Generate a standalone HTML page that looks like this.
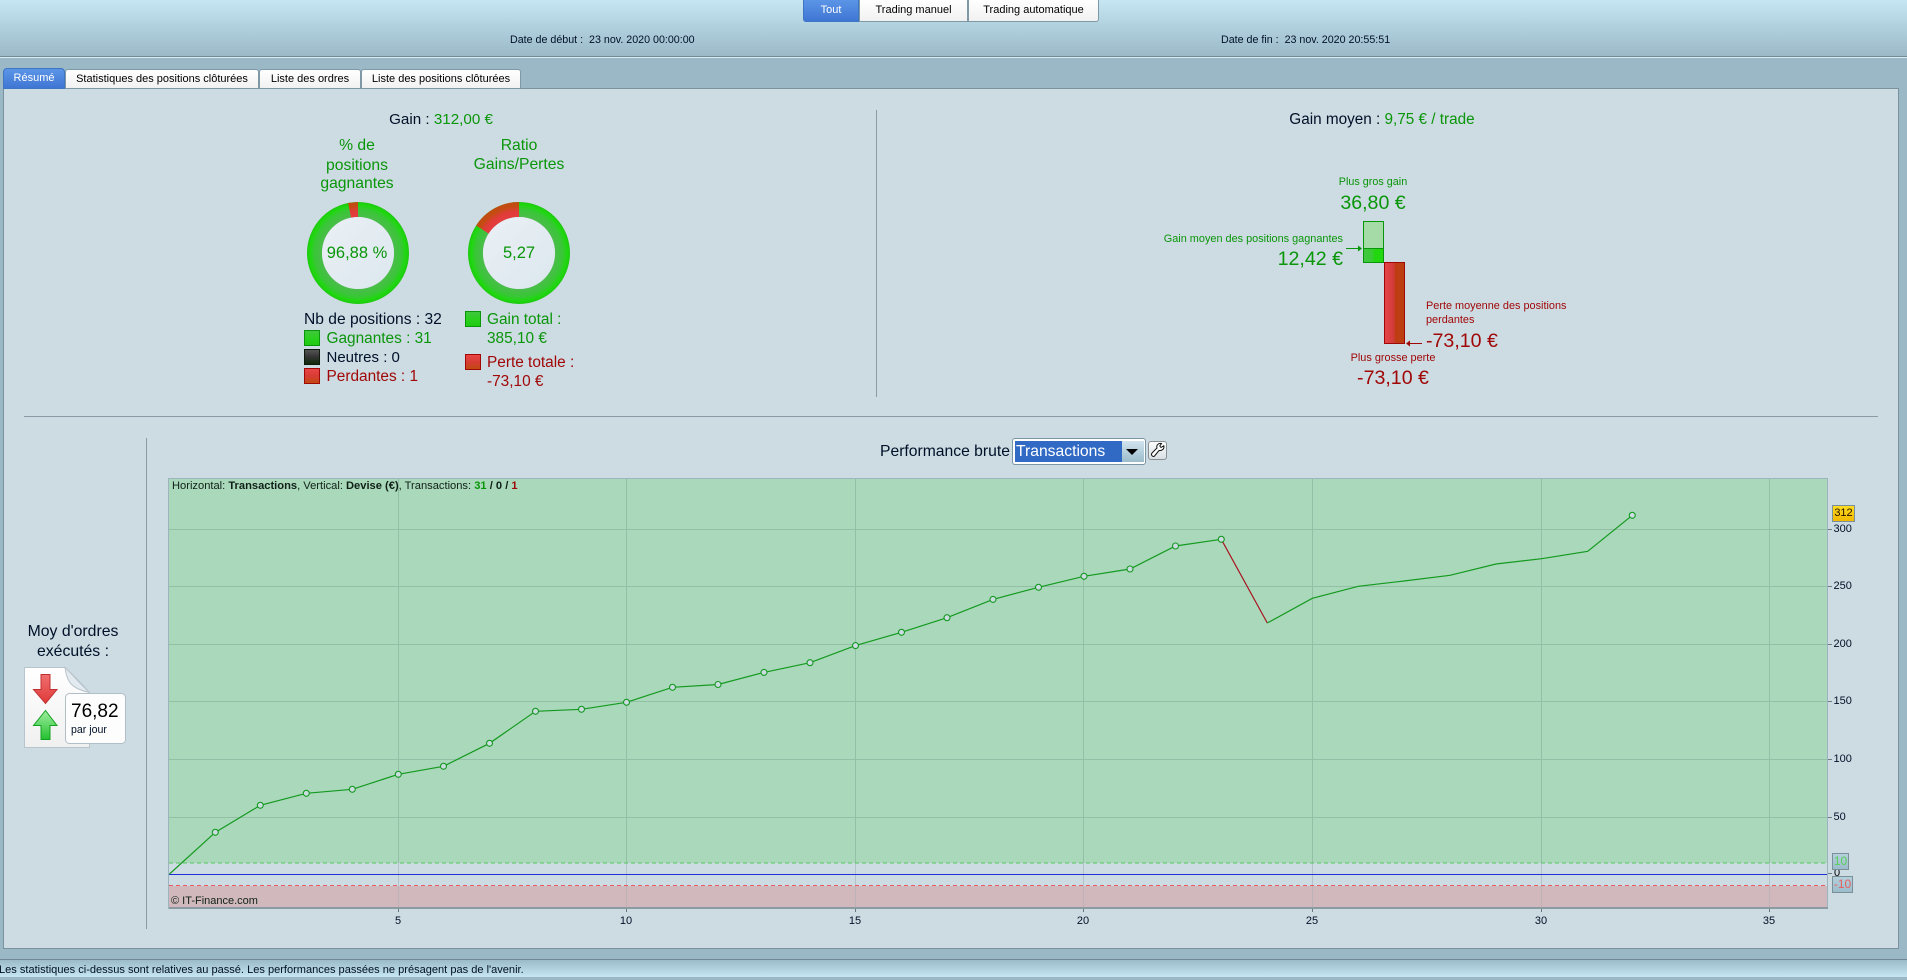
<!DOCTYPE html>
<html lang="fr"><head><meta charset="utf-8"><title>Résumé</title>
<style>
html,body{margin:0;padding:0;width:1907px;height:980px;overflow:hidden;background:#9ab8c5;font-family:"Liberation Sans",Arial,sans-serif;color:#001028}
.t{position:absolute;white-space:nowrap;height:20px;line-height:20px}
.c{text-align:center}.r{text-align:right}
.g{color:#0a960a}.d{color:#a00808}
.b{position:absolute;box-sizing:border-box;border:1px solid #7f98a5;text-align:center;font-size:11px;line-height:20px;background:linear-gradient(#fff,#f1f1f1);color:#000}
.sel{background:linear-gradient(#5b95e6,#3f76d4);color:#fff;border-color:#3f76c4}
.sw{position:absolute;width:16px;height:16px;box-sizing:border-box;border:1px solid}
.sg{border-color:#0a960a;background:linear-gradient(#3fc63f,#2bd01f 50%,#1ecb10)}
.sn{border-color:#0c1a0c;background:linear-gradient(#555 0,#333 50%,#102a08)}
.sr{border-color:#a00808;background:linear-gradient(#e84444,#d83c34 50%,#c04a10)}
.ln{position:absolute;background:#8b9aa5}
</style></head><body>
<div style="position:absolute;left:0;top:0;width:1907px;height:56px;background:linear-gradient(#c6e6f4,#9bb9c6)"></div>
<div style="position:absolute;left:0;top:56px;width:1907px;height:1px;background:#6f8c9a"></div>
<div style="position:absolute;left:0;top:57px;width:1907px;height:1px;background:#dfeaf0"></div>

<div class="b sel" style="left:803px;top:-1px;width:56px;height:23px;border-radius:0 0 0 3px">Tout</div>
<div class="b" style="left:859px;top:-1px;width:109px;height:23px">Trading manuel</div>
<div class="b" style="left:968px;top:-1px;width:131px;height:23px;border-radius:0 0 3px 0">Trading automatique</div>

<div class="t" style="left:510px;top:30px;font-size:10.7px">Date de début :&nbsp; 23 nov. 2020 00:00:00</div>
<div class="t" style="left:1221px;top:30px;font-size:10.7px">Date de fin :&nbsp; 23 nov. 2020 20:55:51</div>

<div style="position:absolute;left:3px;top:88px;width:1896px;height:861px;box-sizing:border-box;border:1px solid #7a929e;background:#cddbe2"></div>
<div class="b sel" style="left:3px;top:68px;width:62px;height:21px;border-radius:4px 4px 0 0;line-height:19px">Résumé</div>
<div class="b" style="left:65px;top:69px;width:194px;height:20px;border-radius:3px 3px 0 0;line-height:18px">Statistiques des positions clôturées</div>
<div class="b" style="left:259px;top:69px;width:102px;height:20px;border-radius:3px 3px 0 0;line-height:18px">Liste des ordres</div>
<div class="b" style="left:361px;top:69px;width:160px;height:20px;border-radius:3px 3px 0 0;line-height:18px">Liste des positions clôturées</div>

<div class="ln" style="left:876px;top:110px;width:1px;height:287px"></div>
<div class="ln" style="left:24px;top:416px;width:1854px;height:1px"></div>
<div class="ln" style="left:146px;top:438px;width:1px;height:491px"></div>

<div class="t c" style="left:261px;width:360px;top:110px;font-size:15.2px">Gain : <span class="g">312,00 €</span></div>
<div class="t c g" style="left:257px;width:200px;top:136px;font-size:15.7px">% de</div>
<div class="t c g" style="left:257px;width:200px;top:156px;font-size:15.7px">positions</div>
<div class="t c g" style="left:257px;width:200px;top:174px;font-size:15.7px">gagnantes</div>
<div class="t c g" style="left:419px;width:200px;top:136px;font-size:15.7px">Ratio</div>
<div class="t c g" style="left:419px;width:200px;top:155px;font-size:15.7px">Gains/Pertes</div>

<svg style="position:absolute;left:0;top:0" width="1907" height="980" viewBox="0 0 1907 980">
<defs>
<radialGradient id="rg1" gradientUnits="userSpaceOnUse" cx="358" cy="253" r="51"><stop offset=".7" stop-color="#4cbc4c"/><stop offset=".86" stop-color="#38c636"/><stop offset=".94" stop-color="#1ed80e"/><stop offset="1" stop-color="#1ec810"/></radialGradient>
<radialGradient id="rg2" gradientUnits="userSpaceOnUse" cx="519" cy="253" r="51"><stop offset=".7" stop-color="#4cbc4c"/><stop offset=".86" stop-color="#38c636"/><stop offset=".94" stop-color="#1ed80e"/><stop offset="1" stop-color="#1ec810"/></radialGradient>
<radialGradient id="rr1" gradientUnits="userSpaceOnUse" cx="358" cy="253" r="51"><stop offset=".7" stop-color="#e63c40"/><stop offset=".82" stop-color="#df3c38"/><stop offset=".92" stop-color="#c44c12"/><stop offset="1" stop-color="#c04c10"/></radialGradient>
<radialGradient id="rr2" gradientUnits="userSpaceOnUse" cx="519" cy="253" r="51"><stop offset=".7" stop-color="#e63c40"/><stop offset=".82" stop-color="#df3c38"/><stop offset=".92" stop-color="#c44c12"/><stop offset="1" stop-color="#c04c10"/></radialGradient>
<linearGradient id="ic" x1="0" y1="0" x2="1" y2="1"><stop offset="0" stop-color="#eaf0f5"/><stop offset="1" stop-color="#dce7ee"/></linearGradient>
<linearGradient id="gb" x1="0" x2="1"><stop offset="0" stop-color="#44c644"/><stop offset=".5" stop-color="#37cc32"/><stop offset=".5" stop-color="#22d610"/><stop offset="1" stop-color="#22d810"/></linearGradient>
<linearGradient id="rb" x1="0" x2="1"><stop offset="0" stop-color="#e84448"/><stop offset=".5" stop-color="#cf3a38"/><stop offset=".5" stop-color="#c03c14"/><stop offset="1" stop-color="#bc3e10"/></linearGradient>
<linearGradient id="dc" x1="0" y1="0" x2="0" y2="1"><stop offset="0" stop-color="#fff"/><stop offset="1" stop-color="#f0f0f0"/></linearGradient>
<linearGradient id="ra" x1="0" y1="0" x2="0" y2="1"><stop offset="0" stop-color="#f07070"/><stop offset="1" stop-color="#e03838"/></linearGradient>
<linearGradient id="ga" x1="0" y1="0" x2="0" y2="1"><stop offset="0" stop-color="#a0eea0"/><stop offset="1" stop-color="#24c030"/></linearGradient>
</defs>
<circle cx="358" cy="253" r="43.5" fill="none" stroke="url(#rg1)" stroke-width="15"/>
<path d="M358 202V217L351 217.7 348.1 203Z" fill="url(#rr1)"/>
<circle cx="358" cy="253" r="36" fill="url(#ic)"/>
<circle cx="519" cy="253" r="43.5" fill="none" stroke="url(#rg2)" stroke-width="15"/>
<path d="M519 202V217A36 36 0 0 0 488.7 233.6L476.1 225.5A51 51 0 0 1 519 202Z" fill="url(#rr2)"/>
<circle cx="519" cy="253" r="36" fill="url(#ic)"/>

<rect x="1363.5" y="221.5" width="20" height="41" fill="#a4dba6" stroke="#0a960a"/>
<rect x="1363.5" y="248.5" width="20" height="14" fill="url(#gb)" stroke="#0a960a"/>
<rect x="1384.5" y="262.5" width="20" height="81" fill="url(#rb)" stroke="#a00808"/>
<path d="M1346 248.5H1361" stroke="#0a960a" fill="none"/><path d="M1362 248.5l-4-3v6z" fill="#0a960a"/>
<path d="M1408 343.5H1422" stroke="#a00808" fill="none"/><path d="M1406 343.5l4-3v6z" fill="#a00808"/>

<path d="M24.5 667.5H65C72 674 82 684 89.5 692.5V747.5H24.5Z" fill="url(#dc)" stroke="#b8c4cc"/>
<path d="M65 667.5C67 680 69 688 89.5 692.5C82 686 72 674 65 667.5Z" fill="#e4ebf0" stroke="#b8c4cc"/>
<path d="M41 674.5H50V689.5H57L45.5 703.5 33.5 689.5H41Z" fill="url(#ra)" stroke="#c03030"/>
<path d="M45.5 710.5L57 725.5H50V739.5H41V725.5H33.5Z" fill="url(#ga)" stroke="#14a020"/>
<rect x="65.5" y="693.5" width="60" height="50" rx="4" fill="#fdfdfd" stroke="#b0bec6"/>

<!-- chart -->
<rect x="168" y="478" width="1660" height="431" fill="#9db4be"/>
<rect x="169" y="479" width="1658" height="384" fill="#aad8ba"/>
<rect x="169" y="863" width="1658" height="23" fill="#cddbe2"/>
<rect x="169" y="886" width="1658" height="21" fill="#d0b8bd"/>
<rect x="169" y="907" width="1659" height="2" fill="#8c9aa2"/>
<g stroke="#92bfa6" stroke-width="1" fill="none">
<path d="M169 529.5H1827M169 586.5H1827M169 644.5H1827M169 701.5H1827M169 759.5H1827M169 817.5H1827"/>
<path d="M398.5 479V863M626.5 479V863M855.5 479V863M1083.5 479V863M1312.5 479V863M1541.5 479V863M1769.5 479V863"/>
</g>
<path d="M398.5 863V886M626.5 863V886M855.5 863V886M1083.5 863V886M1312.5 863V886M1541.5 863V886M1769.5 863V886" stroke="#b3c2ca"/>
<path d="M398.5 886V907M626.5 886V907M855.5 886V907M1083.5 886V907M1312.5 886V907M1541.5 886V907M1769.5 886V907" stroke="#bcb2b8"/>
<path d="M169 863H1827" stroke="#54c860" stroke-dasharray="4 3"/>
<path d="M169 885.5H1827" stroke="#e85c60" stroke-dasharray="4 3"/>
<path d="M169 874.5H1827" stroke="#2030d8"/>
<path d="M398.5 909V912M626.5 909V912M855.5 909V912M1083.5 909V912M1312.5 909V912M1541.5 909V912M1769.5 909V912M1828 529.5H1832M1828 586.5H1832M1828 644.5H1832M1828 701.5H1832M1828 759.5H1832M1828 817.5H1832M1828 873.5H1832" stroke="#6a7a82"/>
<polyline fill="none" stroke="#149a20" stroke-width="1.2" points="169.5,874 215.3,832.3 260.3,805.3 306.3,793.3 352.3,789.3 398.3,774.3 443.5,766.3 489.5,743.3 535.5,711.3 581.5,709.3 626.5,702.3 672.5,687.3 718,684.5 764,672.4 810,662.7 855.5,645.6 901.5,632.3 947,617.7 993,599.4 1038.5,587.3 1084,576.3 1130,569 1175.5,546 1221.3,539.3"/>
<polyline fill="none" stroke="#a81420" stroke-width="1.2" points="1221.3,539.3 1267.3,623"/>
<polyline fill="none" stroke="#149a20" stroke-width="1.2" points="1267.3,623 1312.3,598.3 1358.3,586.3 1404,581 1450,575.3 1496,564 1541.7,558.7 1587.7,551.3 1632.3,515.3"/>
<g fill="#cddbe2" stroke="#149a20" stroke-width="1.1">
<circle cx="215.3" cy="832.3" r="3"/><circle cx="260.3" cy="805.3" r="3"/><circle cx="306.3" cy="793.3" r="3"/><circle cx="352.3" cy="789.3" r="3"/><circle cx="398.3" cy="774.3" r="3"/><circle cx="443.5" cy="766.3" r="3"/><circle cx="489.5" cy="743.3" r="3"/><circle cx="535.5" cy="711.3" r="3"/><circle cx="581.5" cy="709.3" r="3"/><circle cx="626.5" cy="702.3" r="3"/><circle cx="672.5" cy="687.3" r="3"/><circle cx="718" cy="684.5" r="3"/><circle cx="764" cy="672.4" r="3"/><circle cx="810" cy="662.7" r="3"/><circle cx="855.5" cy="645.6" r="3"/><circle cx="901.5" cy="632.3" r="3"/><circle cx="947" cy="617.7" r="3"/><circle cx="993" cy="599.4" r="3"/><circle cx="1038.5" cy="587.3" r="3"/><circle cx="1084" cy="576.3" r="3"/><circle cx="1130" cy="569" r="3"/><circle cx="1175.5" cy="546" r="3"/><circle cx="1221.3" cy="539.3" r="3"/><circle cx="1632.3" cy="515.3" r="3"/>
</g>
</svg>

<div class="t c g" style="left:257px;width:200px;top:243px;font-size:16.5px">96,88 %</div>
<div class="t c g" style="left:419px;width:200px;top:243px;font-size:16.5px">5,27</div>

<div class="t" style="left:304px;top:310px;font-size:15.6px">Nb de positions : 32</div>
<div class="sw sg" style="left:304px;top:330px"></div><div class="t g" style="left:326.5px;top:329px;font-size:15.4px">Gagnantes : 31</div>
<div class="sw sn" style="left:304px;top:349px"></div><div class="t" style="left:326.5px;top:348px;font-size:15px">Neutres : 0</div>
<div class="sw sr" style="left:304px;top:368px"></div><div class="t d" style="left:326.5px;top:367px;font-size:15.4px">Perdantes : 1</div>
<div class="sw sg" style="left:465px;top:311px"></div><div class="t g" style="left:487px;top:310px;font-size:15.4px">Gain total :</div>
<div class="t g" style="left:487px;top:329px;font-size:15.4px">385,10 €</div>
<div class="sw sr" style="left:465px;top:354px"></div><div class="t d" style="left:487px;top:353px;font-size:15.4px">Perte totale :</div>
<div class="t d" style="left:487px;top:372px;font-size:15.4px">-73,10 €</div>

<div class="t c" style="left:1232px;width:300px;top:110px;font-size:15.3px">Gain moyen : <span class="g">9,75 € / trade</span></div>
<div class="t c g" style="left:1273px;width:200px;top:172px;font-size:10.8px">Plus gros gain</div>
<div class="t c g" style="left:1273px;width:200px;top:193px;font-size:19.6px">36,80 €</div>
<div class="t r g" style="left:1043px;width:300px;top:229px;font-size:10.9px">Gain moyen des positions gagnantes</div>
<div class="t r g" style="left:1043px;width:300px;top:249px;font-size:19.6px">12,42 €</div>
<div class="t d" style="left:1426px;top:296px;font-size:10.9px">Perte moyenne des positions</div>
<div class="t d" style="left:1426px;top:310px;font-size:10.9px">perdantes</div>
<div class="t d" style="left:1426px;top:331px;font-size:19.6px">-73,10 €</div>
<div class="t c d" style="left:1293px;width:200px;top:348px;font-size:10.9px">Plus grosse perte</div>
<div class="t c d" style="left:1293px;width:200px;top:368px;font-size:19.6px">-73,10 €</div>

<div class="t c" style="left:0;width:146px;top:622px;font-size:15.8px">Moy d'ordres</div>
<div class="t c" style="left:0;width:146px;top:642px;font-size:15.8px">exécutés :</div>
<div class="t" style="left:71px;top:702px;font-size:19px;color:#000">76,82</div>
<div class="t" style="left:71px;top:720px;font-size:10.6px">par jour</div>

<div class="t" style="left:880px;top:442px;font-size:15.7px;color:#001028">Performance brute</div>
<div style="position:absolute;left:1012px;top:438px;width:134px;height:27px;box-sizing:border-box;border:1px solid #7a95a5;border-radius:3px;background:#fff"></div>
<div class="t" style="left:1015px;top:441px;width:107px;height:21px;line-height:21px;background:#316ac5;color:#fff;font-size:15.7px;text-indent:1px;overflow:hidden">Transactions</div>
<div style="position:absolute;left:1122px;top:441px;width:22px;height:21px;background:linear-gradient(#d0e4ee,#9cbccb)"></div>
<div style="position:absolute;left:1126px;top:449px;width:0;height:0;border-left:6px solid transparent;border-right:6px solid transparent;border-top:6px solid #000"></div>
<div style="position:absolute;left:1148px;top:441px;width:19px;height:19px;box-sizing:border-box;border:1px solid #8a8f92;border-radius:3px;background:linear-gradient(#fdfdfd,#d8e0e4)"></div>
<svg style="position:absolute;left:0;top:0" width="1907" height="980"><path d="M1152 453L1157 448C1156 445 1158.5 443 1161.5 443.5L1159.8 446 1161 447.5 1163.8 445.8C1164.5 449 1162 451 1159 450.5L1154.5 456C1153 457.5 1150.5 455 1152 453Z" fill="#fff" stroke="#111" stroke-width="1"/></svg>

<div class="t" style="left:172px;top:476px;font-size:11.15px;color:#102018">Horizontal: <b>Transactions</b>, Vertical: <b>Devise (€)</b>, Transactions: <b class="g">31</b> <b>/ 0 /</b> <b class="d">1</b></div>
<div class="t" style="left:171px;top:891px;font-size:11px;color:#102018">© IT-Finance.com</div>

<div class="t c" style="left:378px;width:40px;top:911px;font-size:11px">5</div>
<div class="t c" style="left:606px;width:40px;top:911px;font-size:11px">10</div>
<div class="t c" style="left:835px;width:40px;top:911px;font-size:11px">15</div>
<div class="t c" style="left:1063px;width:40px;top:911px;font-size:11px">20</div>
<div class="t c" style="left:1292px;width:40px;top:911px;font-size:11px">25</div>
<div class="t c" style="left:1521px;width:40px;top:911px;font-size:11px">30</div>
<div class="t c" style="left:1749px;width:40px;top:911px;font-size:11px">35</div>

<div class="t" style="left:1833.5px;top:519px;font-size:11px">300</div>
<div class="t" style="left:1833.5px;top:576px;font-size:11px">250</div>
<div class="t" style="left:1833.5px;top:634px;font-size:11px">200</div>
<div class="t" style="left:1833.5px;top:691px;font-size:11px">150</div>
<div class="t" style="left:1833.5px;top:749px;font-size:11px">100</div>
<div class="t" style="left:1833.5px;top:807px;font-size:11px">50</div>
<div style="position:absolute;left:1834px;top:870px;width:10px;height:6px;overflow:hidden;font-size:11px;line-height:6px;color:#000">0</div>

<div style="position:absolute;left:1832px;top:505px;width:23px;height:17px;box-sizing:border-box;border:1px solid #7a8f98;background:linear-gradient(#ffdc20,#f2b800);font-size:11px;line-height:15px;text-align:center;color:#201000">312</div>
<div style="position:absolute;left:1832px;top:853px;width:17px;height:17px;box-sizing:border-box;border:1px solid #7a8f98;background:linear-gradient(#b4d0dc,#9cbccb);font-size:12px;line-height:15px;text-align:center;color:#58d058">10</div>
<div style="position:absolute;left:1832px;top:876px;width:21px;height:17px;box-sizing:border-box;border:1px solid #7a8f98;background:linear-gradient(#b4d0dc,#9cbccb);font-size:12px;line-height:15px;text-align:center;color:#e86060">-10</div>

<div style="position:absolute;left:0;top:959px;width:1907px;height:1px;background:#70889a"></div>
<div style="position:absolute;left:0;top:960px;width:1907px;height:17px;background:linear-gradient(#9cbbc9,#c6e6f4)"></div>
<div class="t" style="left:-1px;top:960px;font-size:11.05px;color:#001020">Les statistiques ci-dessus sont relatives au passé. Les performances passées ne présagent pas de l'avenir.</div>
</body></html>
